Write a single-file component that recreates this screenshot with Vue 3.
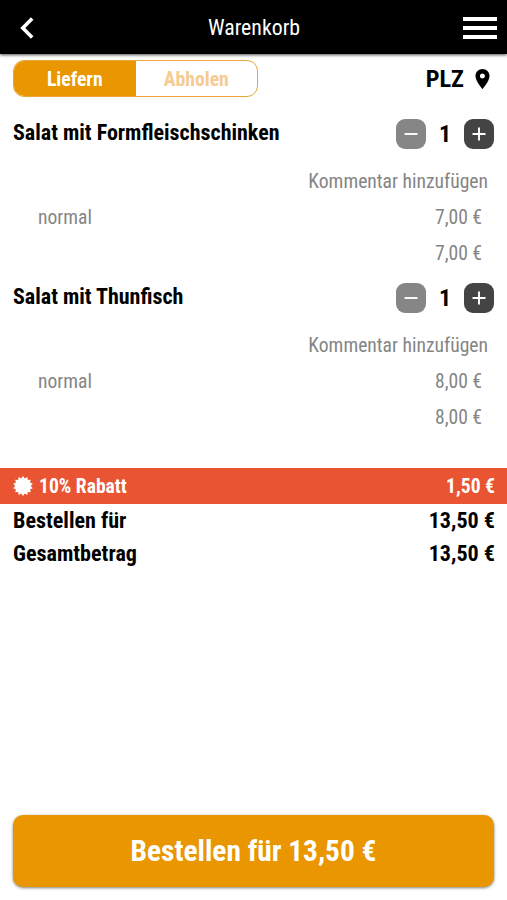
<template>
  <div class="cart">
    <header class="header">
      <button class="icon-button" aria-label="Zurück">
        <svg class="back" viewBox="0 0 14 22">
          <path d="M12.2 1.5L2.8 11L12.2 20.5" fill="none" stroke="#fff" stroke-width="3.6" />
        </svg>
      </button>
      <h1>Warenkorb</h1>
      <button class="icon-button menu" aria-label="Menü">
        <span></span>
        <span></span>
        <span></span>
      </button>
    </header>

    <div class="options">
      <div class="toggle">
        <button :class="{ active: mode === 'delivery' }" @click="mode = 'delivery'">Liefern</button>
        <button :class="{ active: mode === 'pickup' }" @click="mode = 'pickup'">Abholen</button>
      </div>
      <div class="plz">
        PLZ
        <svg class="pin" viewBox="5 2 14 20">
          <path
            d="M12 2C8.13 2 5 5.13 5 9c0 5.25 7 13 7 13s7-7.75 7-13c0-3.87-3.13-7-7-7zm0 9.5a2.5 2.5 0 1 1 0-5 2.5 2.5 0 0 1 0 5z"
          />
        </svg>
      </div>
    </div>

    <ul class="items">
      <li v-for="item in items" :key="item.id" class="item">
        <div class="item-head">
          <h2>{{ item.name }}</h2>
          <div class="quantity">
            <button class="minus" :disabled="item.count === 1" @click="item.count--">
              <svg viewBox="0 0 30 30"><path d="M8.5 15h13" /></svg>
            </button>
            <span>{{ item.count }}</span>
            <button class="plus" @click="item.count++">
              <svg viewBox="0 0 30 30"><path d="M8.5 15h13M15 8.5v13" /></svg>
            </button>
          </div>
        </div>
        <div class="comment">Kommentar hinzufügen</div>
        <div class="line">
          <span>{{ item.variant }}</span>
          <span>{{ format(item.price) }}</span>
        </div>
        <div class="line sum">
          <span>{{ format(item.price * item.count) }}</span>
        </div>
      </li>
    </ul>

    <div class="discount">
      <svg class="badge" viewBox="-10 -10 20 20">
        <polygon :points="badgePoints" />
      </svg>
      <span>10% Rabatt</span>
      <span class="amount">{{ format(discount) }}</span>
    </div>

    <div class="totals">
      <div class="total">
        <span>Bestellen für</span>
        <span>{{ format(total) }}</span>
      </div>
      <div class="total">
        <span>Gesamtbetrag</span>
        <span>{{ format(total) }}</span>
      </div>
    </div>

    <button class="order">Bestellen für {{ format(total) }}</button>
  </div>
</template>

<script setup>
import { ref, computed } from "vue";

const mode = ref("delivery");

const items = ref([
  { id: 1, name: "Salat mit Formfleischschinken", variant: "normal", price: 7, count: 1 },
  { id: 2, name: "Salat mit Thunfisch", variant: "normal", price: 8, count: 1 },
]);

const subtotal = computed(() => items.value.reduce((sum, i) => sum + i.price * i.count, 0));
const discount = computed(() => subtotal.value * 0.1);
const total = computed(() => subtotal.value - discount.value);

const format = (value) => value.toFixed(2).replace(".", ",") + " €";

// 14-pointed seal for the discount row
const badgePoints = Array.from({ length: 28 }, (_, i) => {
  const r = i % 2 ? 10 : 7.8;
  const a = (i * Math.PI) / 14;
  return `${(r * Math.cos(a)).toFixed(2)},${(r * Math.sin(a)).toFixed(2)}`;
}).join(" ");
</script>

<style>
body {
  margin: 0;
  background: #fff;
}
</style>

<style scoped>
.cart {
  display: flex;
  flex-direction: column;
  box-sizing: border-box;
  height: 900px;
  padding-bottom: 13px;
  font-family: "Roboto Condensed", Roboto, sans-serif;
  font-stretch: 75%;
  color: #000;
}

button {
  padding: 0;
  border: none;
  background: none;
  font: inherit;
  cursor: pointer;
}

.header {
  display: flex;
  flex: none;
  align-items: center;
  justify-content: space-between;
  box-sizing: border-box;
  height: 54px;
  padding: 2px 10px 0 20px;
  background: #000;
  box-shadow: 0 1px 3px rgba(0, 0, 0, 0.7);
}

.header h1 {
  margin: 0;
  font-size: 21.8px;
  line-height: 26px;
  font-weight: 400;
  color: #fff;
}

.icon-button {
  display: flex;
  width: 25px;
}

.back {
  width: 14px;
  height: 22px;
}

.menu {
  flex-direction: column;
  gap: 5px;
  width: 34px;
}

.menu span {
  height: 4px;
  background: #fff;
}

.options {
  display: flex;
  flex: none;
  align-items: center;
  justify-content: space-between;
  height: 37px;
  margin-top: 6px;
  padding: 0 17px 0 13px;
}

.toggle {
  display: flex;
  box-sizing: border-box;
  width: 245px;
  height: 37px;
  overflow: hidden;
  border: 1.5px solid #eaa53a;
  border-radius: 11px;
}

.toggle button {
  flex: 1;
  padding-top: 2px;
  font-size: 19.7px;
  font-weight: 700;
  color: #f6cb92;
}

.toggle button.active {
  background: #ea9600;
  color: #fff;
}

.plz {
  display: flex;
  align-items: center;
  gap: 11px;
  font-size: 24.3px;
  font-weight: 700;
}

.pin {
  width: 15px;
  height: 20px;
}

.items {
  flex: none;
  margin: 0;
  padding: 14px 0 0;
  list-style: none;
}

.item {
  height: 164px;
}

.item-head {
  display: flex;
  justify-content: space-between;
  height: 53px;
  padding: 0 13px;
}

.item-head h2 {
  margin: 5px 0 0;
  font-size: 22px;
  line-height: 34px;
  font-weight: 700;
}

.quantity {
  display: flex;
  align-items: center;
  height: 46px;
}

.quantity span {
  width: 38px;
  text-align: center;
  font-size: 24px;
  font-weight: 700;
}

.quantity button {
  width: 30px;
  height: 30px;
  border-radius: 9px;
}

.quantity svg {
  display: block;
  stroke: #fff;
  stroke-width: 1.9;
}

.minus {
  background: #868686;
}

.plus {
  background: #444;
}

.comment,
.line {
  font-size: 19.6px;
  line-height: 36px;
  color: #858585;
}

.comment {
  padding-right: 19px;
  text-align: right;
}

.line {
  display: flex;
  justify-content: space-between;
  padding: 0 25px 0 38px;
}

.sum {
  justify-content: flex-end;
}

.discount {
  display: flex;
  flex: none;
  align-items: center;
  height: 36px;
  margin-top: 29px;
  padding: 0 12px 0 13px;
  background: #e95432;
  color: #fff;
  font-size: 19.6px;
  font-weight: 700;
}

.badge {
  width: 20px;
  height: 20px;
  margin-right: 6px;
  fill: #fff;
}

.amount {
  margin-left: auto;
}

.totals {
  padding: 0 12px 0 13px;
}

.total {
  display: flex;
  justify-content: space-between;
  font-size: 22.1px;
  line-height: 33px;
  font-weight: 700;
}

.order {
  flex: none;
  height: 72px;
  margin: auto 13px 0;
  border-radius: 10px;
  background: #ea9600;
  box-shadow: 0 1px 3px rgba(0, 0, 0, 0.5);
  color: #fff;
  font-size: 29.4px;
  font-weight: 700;
}
</style>
